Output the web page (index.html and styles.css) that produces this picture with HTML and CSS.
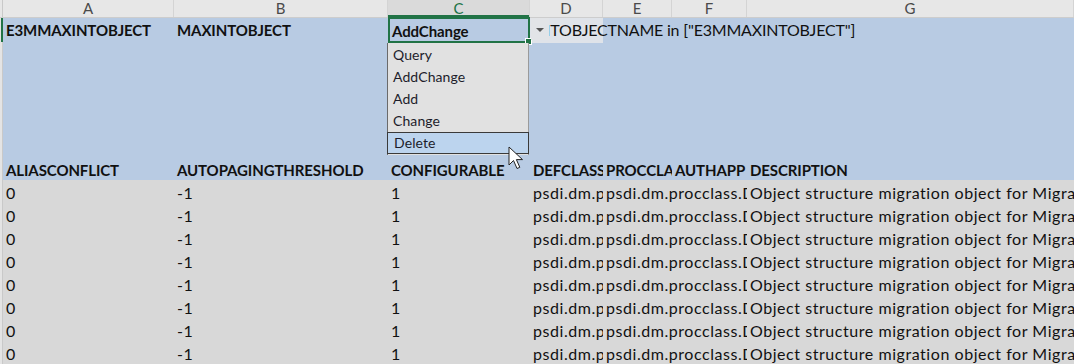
FILE: index.html
```html
<!DOCTYPE html>
<html>
<head>
    <meta charset="utf-8">
    <title>E3MMAXINTOBJECT</title>
    <link rel="stylesheet" href="styles.css">
</head>
<body>
<div class="sheet">
    <div class="row colhead">
        <div class="rh"></div>
        <div class="ch">A</div>
        <div class="ch">B</div>
        <div class="ch sel">C</div>
        <div class="ch">D</div>
        <div class="ch">E</div>
        <div class="ch">F</div>
        <div class="ch">G</div>
    </div>

    <div class="row r1 blue">
        <div class="rh act"></div>
        <div class="c b">E3MMAXINTOBJECT</div>
        <div class="c b">MAXINTOBJECT</div>
        <div class="c b active">
            AddChange
            <span class="handle"></span>
            <span class="dd-btn"></span>
            <ul class="dd-list">
                <li>Query</li>
                <li>AddChange</li>
                <li>Add</li>
                <li>Change</li>
                <li class="hover">Delete</li>
            </ul>
            <svg class="cursor" width="17" height="26" viewBox="0 0 17 26">
                <path d="M1 1 L1 19 L5.5 14.5 L9 22.5 L11.8 21.3 L8.4 13.6 L14.5 13.6 Z" fill="#fff" stroke="#222" stroke-width="1" stroke-linejoin="round"/>
            </svg>
        </div>
        <div class="c d1">INTOBJECTNAME in ["E3MMAXINTOBJECT"]</div>
    </div>

    <div class="row blue filler">
        <div class="rh"></div>
    </div>

    <div class="row blue">
        <div class="rh"></div>
        <div class="c b">ALIASCONFLICT</div>
        <div class="c b">AUTOPAGINGTHRESHOLD</div>
        <div class="c b">CONFIGURABLE</div>
        <div class="c b">DEFCLASS</div>
        <div class="c b">PROCCLASS</div>
        <div class="c b">AUTHAPP</div>
        <div class="c b">DESCRIPTION</div>
    </div>

    <div id="rows"></div>
</div>
<script>
    (function () {
        var box = document.getElementById('rows');
        var html = '';
        for (var i = 0; i < 8; i++) {
            html += '<div class="row data">' +
                '<div class="rh"></div>' +
                '<div class="c">0</div>' +
                '<div class="c">-1</div>' +
                '<div class="c">1</div>' +
                '<div class="c">psdi.dm.procclass.DMMaxIntObjectSet</div>' +
                '<div class="c span2">psdi.dm.procclass.DMMaxIntObject</div>' +
                '<div class="c">Object structure migration object for Migration Manager</div>' +
                '</div>';
        }
        box.innerHTML = html;
    })();
</script>
</body>
</html>
```

FILE: styles.css
```css
html, body {
    margin: 0;
    padding: 0;
    height: 100%;
}

body {
    background: #d9d9d9;
    color: #111;
    font: 16px/20px Lato, "Liberation Sans", sans-serif;
    letter-spacing: 0.55px;
    overflow: hidden;
}

ul, li {
    margin: 0;
    padding: 0;
    list-style: none;
}

.sheet {
    width: 1074px;
}

.row {
    display: grid;
    grid-template-columns: 3px 171px 214px 142px 73px 69px 75px 1fr;
    height: 23px;
}

.rh {
    background: #e4e4e4;
    border-right: 1px solid #c9c9c9;
    box-sizing: border-box;
}

.rh.act {
    border-right: 2px solid #217346;
}

/* column letters */
.colhead {
    height: 18px;
    background: #e7e7e7;
    border-bottom: 1px solid #cdcdcd;
    box-sizing: border-box;
}

.ch {
    border-right: 1px solid #d4d4d4;
    text-align: center;
    font-size: 15px;
    line-height: 17px;
    letter-spacing: 0;
    color: #4a4a4a;
}

.ch.sel {
    background: #dadada;
    color: #217346;
    box-shadow: inset 0 -2px 0 #217346;
}

.colhead .rh {
    background: #e7e7e7;
}

/* cells */
.c {
    padding: 3px 3px 0;
    white-space: nowrap;
    overflow: hidden;
    min-width: 0;
}

.b {
    font-size: 15px;
    font-weight: 700;
    letter-spacing: -0.1px;
}

.blue {
    background: #b8cbe3;
}

.r1 {
    height: 24px;
}

.r1 .c {
    padding-top: 2px;
}

.filler {
    height: 115px;
}

.data {
    background: #d8d8d8;
}

.span2 {
    grid-column: span 2;
}

.d1 {
    grid-column: span 4;
    overflow: hidden;
    padding-left: 4px;
    letter-spacing: -0.2px;
    background: linear-gradient(90deg, #dfe3e9 0, #dfe3e9 73px, #b8cbe3 73px);
}

/* active cell with list validation */
.active {
    position: relative;
    overflow: visible;
    border: 2px solid #217346;
    padding: 0 2px;
    margin-top: -1px;
    line-height: 20px;
}

.active .handle {
    position: absolute;
    right: -4px;
    bottom: -4px;
    width: 5px;
    height: 5px;
    background: #217346;
    border: 1px solid #fff;
}

.dd-btn {
    position: absolute;
    left: 100%;
    top: -1px;
    margin-left: 3px;
    width: 18px;
    height: 22px;
    background: #e2e4e7;
    z-index: 3;
}

.dd-btn:after {
    content: "";
    position: absolute;
    left: 5px;
    top: 10px;
    border-left: 4px solid transparent;
    border-right: 4px solid transparent;
    border-top: 4px solid #555;
}

.dd-list {
    position: absolute;
    left: -3px;
    top: 100%;
    margin-top: 2px;
    width: 142px;
    height: 112px;
    padding-top: 1px;
    background: #e1e1e1;
    border-left: 1px solid #6a6a6a;
    border-right: 1px solid #9a9a9a;
    box-sizing: border-box;
    font-weight: 400;
    font-size: 14px;
    letter-spacing: 0.1px;
    z-index: 4;
}

.dd-list li {
    height: 22px;
    line-height: 22px;
    padding: 0 5px;
    color: #1d1d2b;
    box-sizing: border-box;
}

.dd-list li.hover {
    background: #bcd4ee;
    border: 1px solid #3a3a3a;
    margin: 0 -1px;
    line-height: 20px;
    padding-left: 6px;
}

.cursor {
    position: absolute;
    left: 118px;
    top: 127px;
    z-index: 6;
}
```
